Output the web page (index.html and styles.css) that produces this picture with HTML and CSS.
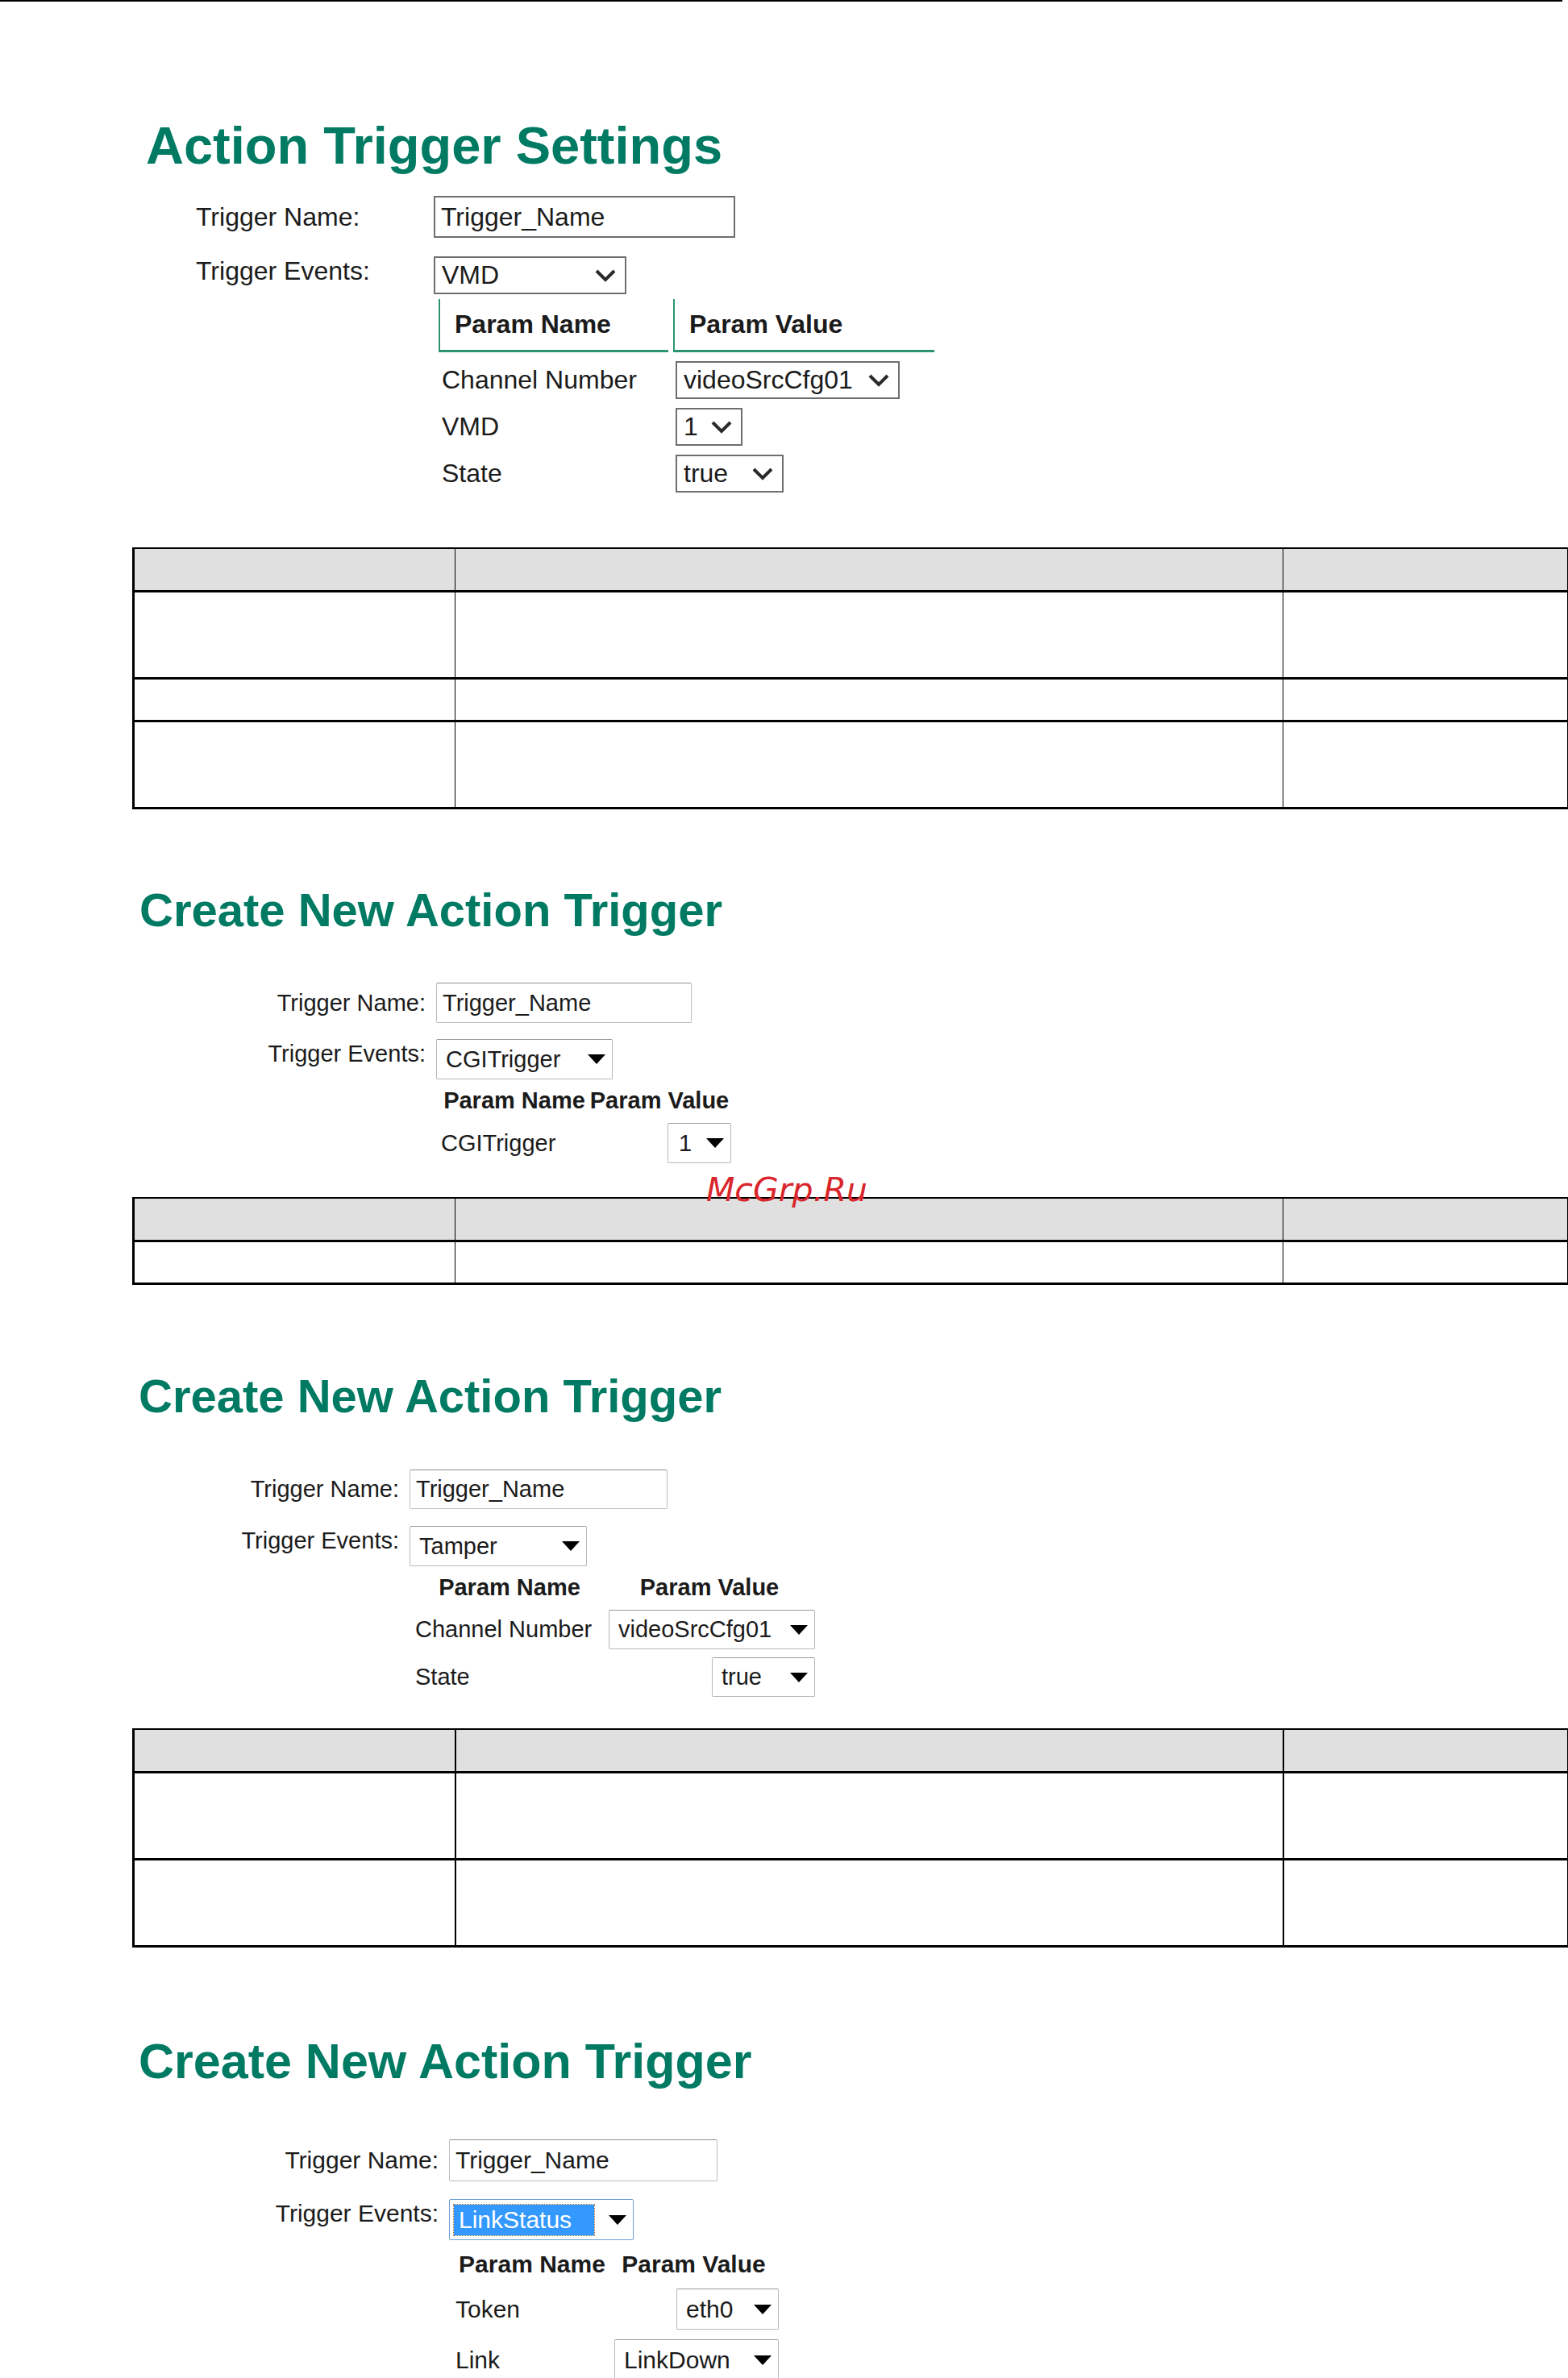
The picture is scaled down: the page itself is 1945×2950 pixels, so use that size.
FILE: index.html
```html
<!DOCTYPE html>
<html lang="en">
<head>
    <meta charset="UTF-8">
    <meta name="viewport" content="width=device-width, initial-scale=1.0">
    <title>Action Trigger Settings</title>
    <link rel="stylesheet" href="styles.css">
</head>
<body>
    <div class="top-rule"></div>

    <!-- Action Trigger Settings (VMD) -->
    <div class="section s1">
        <h1 class="title">Action Trigger Settings</h1>
        <div class="trigger-form">
            <div class="label">Trigger Name:</div>
            <input type="text" class="text-box" value="Trigger_Name">
            <div class="label top">Trigger Events:</div>
            <div class="control">
                <div class="select w-vmd"><span>VMD</span><svg class="chevron" viewBox="0 0 28 18"><polyline points="3,3 14,14 25,3"/></svg></div>
                <div class="params">
                    <div class="param-head">Param Name</div>
                    <div class="param-head">Param Value</div>
                    <div class="param-name">Channel Number</div>
                    <div class="param-value">
                        <div class="select w-src"><span>videoSrcCfg01</span><svg class="chevron" viewBox="0 0 28 18"><polyline points="3,3 14,14 25,3"/></svg></div>
                    </div>
                    <div class="param-name">VMD</div>
                    <div class="param-value">
                        <div class="select w-one"><span>1</span><svg class="chevron" viewBox="0 0 28 18"><polyline points="3,3 14,14 25,3"/></svg></div>
                    </div>
                    <div class="param-name">State</div>
                    <div class="param-value">
                        <div class="select w-true"><span>true</span><svg class="chevron" viewBox="0 0 28 18"><polyline points="3,3 14,14 25,3"/></svg></div>
                    </div>
                </div>
            </div>
        </div>
        <table class="spec-table">
            <colgroup><col class="col-a"><col class="col-b"><col class="col-c"></colgroup>
            <tr class="head"><th></th><th></th><th></th></tr>
            <tr class="tall"><td></td><td></td><td></td></tr>
            <tr class="short"><td></td><td></td><td></td></tr>
            <tr class="tall"><td></td><td></td><td></td></tr>
        </table>
    </div>

    <!-- Create New Action Trigger (CGITrigger) -->
    <div class="section s2">
        <h1 class="title">Create New Action Trigger</h1>
        <div class="trigger-form modern">
            <div class="label">Trigger Name:</div>
            <input type="text" class="text-box" value="Trigger_Name">
            <div class="label top">Trigger Events:</div>
            <div class="control">
                <div class="select w-cgi"><span>CGITrigger</span><svg class="caret" viewBox="0 0 22 12"><polygon points="0,0 22,0 11,12"/></svg></div>
                <div class="params">
                    <div class="param-head">Param Name</div>
                    <div class="param-head">Param Value</div>
                    <div class="param-name">CGITrigger</div>
                    <div class="param-value">
                        <div class="select w-one2"><span>1</span><svg class="caret" viewBox="0 0 22 12"><polygon points="0,0 22,0 11,12"/></svg></div>
                    </div>
                </div>
            </div>
        </div>
        <table class="spec-table">
            <colgroup><col class="col-a"><col class="col-b"><col class="col-c"></colgroup>
            <tr class="head"><th></th><th></th><th></th></tr>
            <tr class="short"><td></td><td></td><td></td></tr>
        </table>
    </div>

    <!-- Create New Action Trigger (Tamper) -->
    <div class="section s3">
        <h1 class="title">Create New Action Trigger</h1>
        <div class="trigger-form modern">
            <div class="label">Trigger Name:</div>
            <input type="text" class="text-box" value="Trigger_Name">
            <div class="label top">Trigger Events:</div>
            <div class="control">
                <div class="select w-tamper"><span>Tamper</span><svg class="caret" viewBox="0 0 22 12"><polygon points="0,0 22,0 11,12"/></svg></div>
                <div class="params">
                    <div class="param-head">Param Name</div>
                    <div class="param-head">Param Value</div>
                    <div class="param-name">Channel Number</div>
                    <div class="param-value">
                        <div class="select w-src2"><span>videoSrcCfg01</span><svg class="caret" viewBox="0 0 22 12"><polygon points="0,0 22,0 11,12"/></svg></div>
                    </div>
                    <div class="param-name">State</div>
                    <div class="param-value">
                        <div class="select w-true2"><span>true</span><svg class="caret" viewBox="0 0 22 12"><polygon points="0,0 22,0 11,12"/></svg></div>
                    </div>
                </div>
            </div>
        </div>
        <table class="spec-table thick">
            <colgroup><col class="col-a"><col class="col-b"><col class="col-c"></colgroup>
            <tr class="head"><th></th><th></th><th></th></tr>
            <tr class="tall"><td></td><td></td><td></td></tr>
            <tr class="tall"><td></td><td></td><td></td></tr>
        </table>
    </div>

    <!-- Create New Action Trigger (LinkStatus) -->
    <div class="section s4">
        <h1 class="title">Create New Action Trigger</h1>
        <div class="trigger-form modern">
            <div class="label">Trigger Name:</div>
            <input type="text" class="text-box" value="Trigger_Name">
            <div class="label top">Trigger Events:</div>
            <div class="control">
                <div class="select w-link focused"><span class="hl">LinkStatus</span><svg class="caret" viewBox="0 0 22 12"><polygon points="0,0 22,0 11,12"/></svg></div>
                <div class="params">
                    <div class="param-head">Param Name</div>
                    <div class="param-head">Param Value</div>
                    <div class="param-name">Token</div>
                    <div class="param-value">
                        <div class="select w-eth"><span>eth0</span><svg class="caret" viewBox="0 0 22 12"><polygon points="0,0 22,0 11,12"/></svg></div>
                    </div>
                    <div class="param-name">Link</div>
                    <div class="param-value">
                        <div class="select w-linkdown"><span>LinkDown</span><svg class="caret" viewBox="0 0 22 12"><polygon points="0,0 22,0 11,12"/></svg></div>
                    </div>
                </div>
            </div>
        </div>
    </div>

    <div class="watermark">McGrp.Ru</div>
</body>
</html>
```

FILE: styles.css
```css
body {
    margin: 0;
    position: relative;
    height: 2950px;
    overflow: hidden;
    background: #fff;
    color: #1b1b1b;
    font-family: "Liberation Sans", Arial, sans-serif;
}
.top-rule {
    width: 1938px;
    height: 2px;
    background: #000;
}

/* headings */
.title {
    margin: 0;
    color: #007a63;
    font-weight: bold;
    line-height: 1;
}
.s1 .title { margin-top: 146px; margin-left: 181px; font-size: 65px; }
.s2 .title { margin-top: 96px; margin-left: 173px; font-size: 58px; }
.s3 .title { margin-top: 109px; margin-left: 172px; font-size: 58px; }
.s4 .title { margin-top: 111px; margin-left: 172px; font-size: 61px; }

/* form */
.trigger-form {
    display: grid;
    align-items: center;
}
.label.top {
    align-self: start;
    line-height: 36px;
}
.text-box {
    box-sizing: border-box;
    margin: 0;
    font: inherit;
    color: inherit;
    background: #fff;
    outline: none;
}
.select {
    box-sizing: border-box;
    display: flex;
    align-items: center;
    justify-content: space-between;
    background: #fff;
    white-space: nowrap;
}
.chevron {
    width: 28px;
    height: 18px;
    fill: none;
    stroke: #2a2a2a;
    stroke-width: 4;
}
.caret {
    width: 22px;
    height: 12px;
    fill: #000;
}
.params {
    display: grid;
    align-items: center;
}

/* old style page */
.s1 .trigger-form {
    margin: 30px 0 0 243px;
    grid-template-columns: 295px auto;
    row-gap: 23px;
    font-size: 32px;
}
.s1 .text-box {
    width: 374px;
    height: 52px;
    border: 2px solid #6e6e6e;
    padding: 0 7px;
}
.s1 .select {
    height: 47px;
    border: 2px solid #6e6e6e;
    padding: 0 10px 0 8px;
}
.s1 .params {
    grid-template-columns: 285px 324px;
    column-gap: 6px;
    row-gap: 11px;
    margin: 6px 0 0 6px;
}
.s1 .param-head {
    box-sizing: border-box;
    height: 66px;
    display: flex;
    align-items: center;
    padding-left: 18px;
    border-left: 2px solid #2b9474;
    border-bottom: 3px solid #2b9474;
    font-weight: bold;
}
.s1 .param-name { padding-left: 4px; }
.s1 .param-value { padding-left: 3px; }
.w-vmd { width: 239px; }
.w-src { width: 278px; }
.w-one { width: 83px; }
.w-true { width: 134px; }

/* newer pages */
.modern .label {
    text-align: right;
    padding-right: 13px;
}
.modern .text-box {
    border: 1px solid #bdbdbd;
    border-top-color: #8f8f8f;
    border-radius: 2px;
    padding: 0 7px;
}
.modern .select {
    height: 50px;
    border: 1px solid #b8b8b8;
    border-top-color: #9a9a9a;
    border-radius: 2px;
    padding: 0 8px 0 11px;
}
.modern .param-head {
    font-weight: bold;
    text-align: center;
    line-height: 36px;
}
.modern .param-value {
    display: flex;
    justify-content: flex-end;
}

.s2 .trigger-form {
    margin: 61px 0 0 300px;
    grid-template-columns: 241px auto;
    row-gap: 20px;
    font-size: 29px;
}
.s2 .text-box { width: 317px; height: 50px; }
.s2 .params {
    grid-template-columns: 182px 178px;
    row-gap: 10px;
    margin: 8px 0 0 6px;
}
.w-cgi { width: 219px; }
.w-one2 { width: 79px; padding-left: 13px !important; }

.s3 .trigger-form {
    margin: 62px 0 0 270px;
    grid-template-columns: 238px auto;
    row-gap: 21px;
    font-size: 29px;
}
.s3 .text-box { width: 320px; height: 49px; }
.s3 .params {
    grid-template-columns: 234px 262px;
    row-gap: 10px;
    margin: 8px 0 0 7px;
}
.s3 .param-value .select { height: 49px; }
.w-tamper { width: 220px; }
.w-src2 { width: 256px; }
.w-true2 { width: 128px; }

.s4 .trigger-form {
    margin: 66px 0 0 300px;
    grid-template-columns: 257px auto;
    row-gap: 22px;
    font-size: 30px;
}
.s4 .text-box { width: 333px; height: 52px; }
.s4 .select { height: 51px; }
.s4 .params {
    grid-template-columns: 190px 211px;
    row-gap: 12px;
    margin: 12px 0 0 8px;
}
.w-link { width: 229px; }
.w-eth { width: 127px; }
.w-linkdown { width: 204px; }
.select.focused {
    border-color: #6f9fd4;
    padding-left: 5px;
}
.hl {
    box-sizing: border-box;
    width: 174px;
    height: 38px;
    line-height: 38px;
    padding-left: 6px;
    background: #3399ff;
    color: #fff;
    outline: 1px dotted #9a6a3a;
}

/* empty spec tables under each screenshot */
.spec-table {
    width: 1779px;
    margin-left: 164px;
    border-collapse: collapse;
    table-layout: fixed;
}
.s1 .spec-table { margin-top: 68px; }
.s2 .spec-table { margin-top: 42px; }
.s3 .spec-table { margin-top: 39px; }
.col-a { width: 399px; }
.col-b { width: 1027px; }
.col-c { width: 353px; }
.spec-table th,
.spec-table td {
    padding: 0;
    border-left: 1px solid #000;
    border-right: 1px solid #000;
    border-bottom: 3px solid #000;
}
.spec-table th {
    background: #e0e0e0;
    border-top: 2px solid #000;
}
.spec-table tr > :first-child { border-left: 3px solid #000; }
.spec-table.thick th,
.spec-table.thick td {
    border-left-width: 2px;
    border-right-width: 2px;
}
.spec-table.thick tr > :first-child { border-left-width: 3px; }
.spec-table .head th { height: 51px; }
.spec-table .tall td { height: 105px; }
.spec-table .short td { height: 50px; }

.watermark {
    position: absolute;
    left: 876px;
    top: 1456px;
    font-family: "DejaVu Sans", sans-serif;
    font-style: italic;
    font-size: 41px;
    line-height: 1;
    color: #d9252b;
}
```
